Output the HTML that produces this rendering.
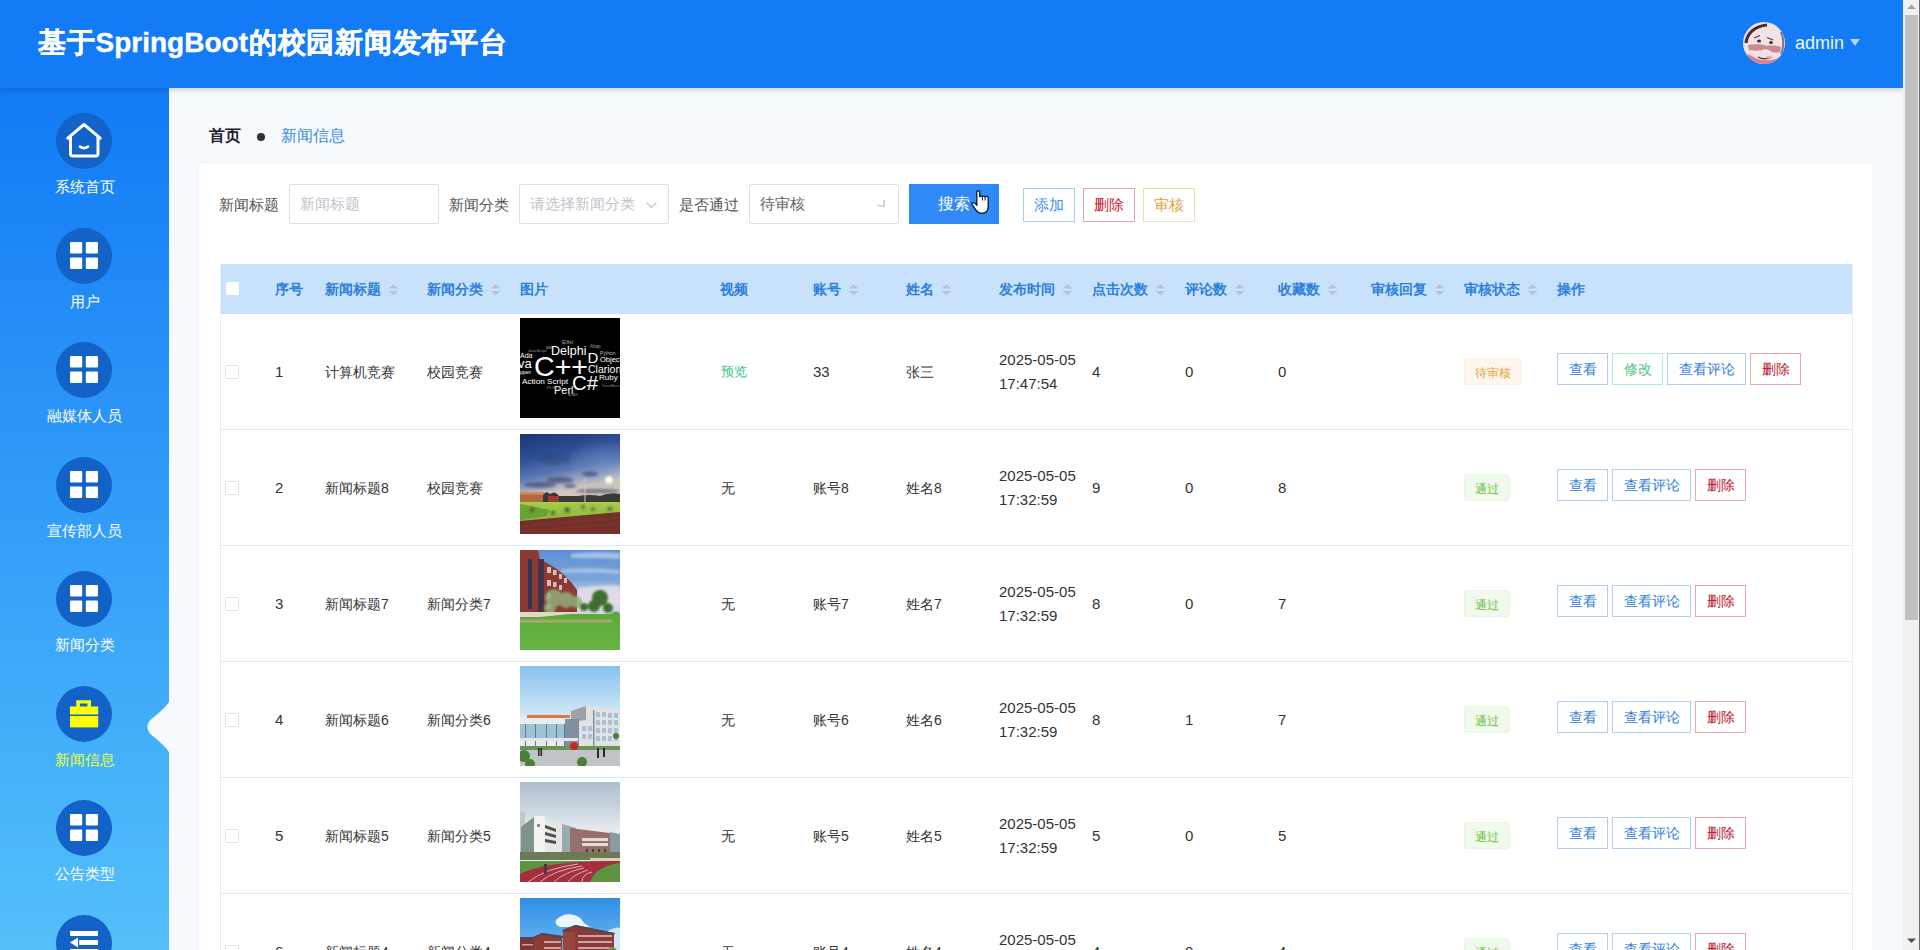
<!DOCTYPE html>
<html><head><meta charset="utf-8"><title>news</title>
<style>
*{box-sizing:border-box}
html,body{margin:0;padding:0}
body{width:1920px;height:950px;overflow:hidden;position:relative;background:#f6f9fe;font-family:"Liberation Sans",sans-serif;color:#606266}
#hdr{position:absolute;left:0;top:0;width:1903px;height:88px;background:#137bf5;box-shadow:0 1px 6px rgba(0,0,0,.22);z-index:5}
#title{position:absolute;left:38px;top:23px;font-size:28px;font-weight:bold;color:#fff;line-height:40px;white-space:nowrap;-webkit-text-stroke:0.4px #fff}
#ava{position:absolute;left:1743px;top:22px;width:42px;height:42px;border-radius:50%;overflow:hidden}
#uname{position:absolute;left:1795px;top:32px;font-size:18px;line-height:22px;color:#eef4ff}
#caret{position:absolute;left:1850px;top:39px;width:0;height:0;border-left:5.5px solid transparent;border-right:5.5px solid transparent;border-top:7px solid #b9d5fb}
#side{position:absolute;left:0;top:88px;width:169px;height:862px;background:linear-gradient(180deg,#127af5 0%,#319cf8 48%,#53c0fa 100%);z-index:2}
.mi{position:absolute;left:0;width:169px;height:110px}
.mi .c{position:absolute;left:56px;top:0;width:56px;height:56px;border-radius:50%;background:#1362c7}
.mi .c svg{position:absolute;left:0;top:0}
.mi .t{position:absolute;left:0;width:169px;top:63px;text-align:center;font-size:15px;color:#fff;line-height:22px;white-space:nowrap}
#notch{position:absolute;left:140px;top:699px;z-index:3}
#scroll{position:absolute;left:1903px;top:0;width:17px;height:950px;background:#f1f1f1;z-index:6;border-right:1px solid #6b6b6b}
#thumb{position:absolute;left:2px;top:15px;width:13px;height:605px;background:#c1c1c1}
#card{position:absolute;left:199px;top:164px;width:1673px;height:800px;background:#fff;box-shadow:0 0 3px rgba(0,0,0,.03)}
.crumb{position:absolute;top:125px;font-size:16px;line-height:22px;white-space:nowrap}
.lbl{position:absolute;top:194px;font-size:15px;line-height:22px;color:#555;white-space:nowrap}
.inp{position:absolute;top:184px;width:150px;height:40px;border:1px solid #dcdfe6;background:#fff;border-radius:2px}
.inp>span{position:absolute;left:10px;top:8px;font-size:15px;line-height:22px;white-space:nowrap}
.btn{position:absolute;top:188px;width:52px;height:34px;border:1px solid;background:#fff;font-size:15px;line-height:32px;text-align:center;white-space:nowrap}
#thead{position:absolute;left:220px;top:264px;width:1633px;height:50px;background:#c8e2fc}
.th{position:absolute;top:279px;font-size:14px;font-weight:bold;color:#2d7fdb;line-height:20px;white-space:nowrap}
.sort{position:absolute;top:282px;width:11px;height:12px}
.row{position:absolute;left:220px;width:1633px;height:116px;border-bottom:1px solid #dbe8f6;background:#fff}
.td{position:absolute;font-size:14px;color:#333;line-height:22px;white-space:nowrap}
.num{font-size:15px}
.cb{position:absolute;width:14px;height:14px;border:1px solid #dcdfe6;border-radius:2px;background:#fff}
.img{position:absolute;left:520px;width:100px;height:100px;overflow:hidden}
.tag{position:absolute;left:1464px;height:27px;border:1px solid;border-radius:4px;font-size:12px;line-height:28px;text-align:center;border-radius:3px;white-space:nowrap}
.j{display:inline-block;text-align:justify;text-align-last:justify;white-space:nowrap;vertical-align:top}
.nocjk .k{font-size:130%;line-height:0;vertical-align:-0.07em;-webkit-text-stroke:0.5px currentColor}
.ob{position:absolute;height:32px;border:1px solid;background:#fff;font-size:14px;line-height:30px;text-align:center;white-space:nowrap}
</style></head>
<body>
<div id="hdr"><div id="title"><span class="j" style="width:469px"><span class="k">基于</span>SpringBoot<span class="k">的校园新闻发布平台</span></span></div>
<div id="ava"><svg width="42" height="42" viewBox="0 0 42 42"><rect width="42" height="42" fill="#f2e2e6"/><path d="M3 21C4 11 12 4 24 3" fill="none" stroke="#4a2a36" stroke-width="3.2"/><path d="M38 10C41 16 41 26 38 32" fill="none" stroke="#3a2a40" stroke-width="2" opacity=".6"/><path d="M11 16L17 13.5M24 15.5L30 18" stroke="#553a40" stroke-width="1.3"/><ellipse cx="16" cy="19" rx="2" ry="1.6" fill="#3a2a30"/><ellipse cx="28" cy="20.5" rx="1.8" ry="1.6" fill="#3a2a30"/><path d="M5 23C10 22 20 22 24 24C28 23 36 24 38 25L37 30C33 31 29 31 26 28L22 27C18 29 10 29 6 28Z" fill="#c98a90"/><path d="M15 35Q21 38 27 36" fill="none" stroke="#4a2a30" stroke-width="1.2"/><path d="M4 32C10 34 14 38 20 38C28 39 34 37 38 34L36 42H6Z" fill="#e07c92"/><ellipse cx="26" cy="35" rx="3" ry="1.6" fill="#f0a8b6"/></svg></div>
<div id="uname">admin</div><div id="caret"></div></div>
<div id="side">
<div class="mi" style="top:25.00px"><div class="c"><svg width="56" height="56" viewBox="0 0 56 56"><path d="M11.8 25.2L28 11.5L44.2 25.2" fill="none" stroke="#fff" stroke-width="3" stroke-linejoin="round" stroke-linecap="round"/><path d="M14.5 23.5V40.5Q14.5 43 17 43H39.5Q42 43 42 40.5V23.5" fill="none" stroke="#fff" stroke-width="3" stroke-linecap="round"/><path d="M24 33.6Q28 36.6 32 33.6" fill="none" stroke="#fff" stroke-width="2.6" stroke-linecap="round"/></svg></div><div class="t" style="color:#fff"><span class="j" style="width:60.00px"><span class="k">系统首页</span></span></div></div>
<div class="mi" style="top:139.57px"><div class="c"><svg width="56" height="56" viewBox="0 0 56 56"><rect x="14" y="14" width="12.2" height="11.4" rx="1" fill="#fff"/><rect x="29.8" y="14" width="12.2" height="11.4" rx="1" fill="#fff"/><rect x="14" y="29.6" width="12.2" height="11.4" rx="1" fill="#fff"/><rect x="29.8" y="29.6" width="12.2" height="11.4" rx="1" fill="#fff"/></svg></div><div class="t" style="color:#fff"><span class="j" style="width:30.00px"><span class="k">用户</span></span></div></div>
<div class="mi" style="top:254.14px"><div class="c"><svg width="56" height="56" viewBox="0 0 56 56"><rect x="14" y="14" width="12.2" height="11.4" rx="1" fill="#fff"/><rect x="29.8" y="14" width="12.2" height="11.4" rx="1" fill="#fff"/><rect x="14" y="29.6" width="12.2" height="11.4" rx="1" fill="#fff"/><rect x="29.8" y="29.6" width="12.2" height="11.4" rx="1" fill="#fff"/></svg></div><div class="t" style="color:#fff"><span class="j" style="width:75.00px"><span class="k">融媒体人员</span></span></div></div>
<div class="mi" style="top:368.71px"><div class="c"><svg width="56" height="56" viewBox="0 0 56 56"><rect x="14" y="14" width="12.2" height="11.4" rx="1" fill="#fff"/><rect x="29.8" y="14" width="12.2" height="11.4" rx="1" fill="#fff"/><rect x="14" y="29.6" width="12.2" height="11.4" rx="1" fill="#fff"/><rect x="29.8" y="29.6" width="12.2" height="11.4" rx="1" fill="#fff"/></svg></div><div class="t" style="color:#fff"><span class="j" style="width:75.00px"><span class="k">宣传部人员</span></span></div></div>
<div class="mi" style="top:483.28px"><div class="c"><svg width="56" height="56" viewBox="0 0 56 56"><rect x="14" y="14" width="12.2" height="11.4" rx="1" fill="#fff"/><rect x="29.8" y="14" width="12.2" height="11.4" rx="1" fill="#fff"/><rect x="14" y="29.6" width="12.2" height="11.4" rx="1" fill="#fff"/><rect x="29.8" y="29.6" width="12.2" height="11.4" rx="1" fill="#fff"/></svg></div><div class="t" style="color:#fff"><span class="j" style="width:60.00px"><span class="k">新闻分类</span></span></div></div>
<div class="mi" style="top:597.85px"><div class="c"><svg width="56" height="56" viewBox="0 0 56 56"><path d="M20.3 21V14.2H35V21H31.4V17.5H23.9V21Z" fill="#ffff00"/><rect x="14" y="20.5" width="28.2" height="8" fill="#ffff00"/><rect x="14" y="30" width="28.2" height="11.4" fill="#ffff00"/></svg></div><div class="t" style="color:#ebff3c"><span class="j" style="width:60.00px"><span class="k">新闻信息</span></span></div></div>
<div class="mi" style="top:712.42px"><div class="c"><svg width="56" height="56" viewBox="0 0 56 56"><rect x="14" y="14" width="12.2" height="11.4" rx="1" fill="#fff"/><rect x="29.8" y="14" width="12.2" height="11.4" rx="1" fill="#fff"/><rect x="14" y="29.6" width="12.2" height="11.4" rx="1" fill="#fff"/><rect x="29.8" y="29.6" width="12.2" height="11.4" rx="1" fill="#fff"/></svg></div><div class="t" style="color:#fff"><span class="j" style="width:60.00px"><span class="k">公告类型</span></span></div></div>
<div class="mi" style="top:826.99px"><div class="c"><svg width="56" height="56" viewBox="0 0 56 56"><rect x="14" y="16" width="28" height="5" fill="#fff"/><rect x="23.2" y="25" width="18.8" height="5" fill="#fff"/><path d="M14 27.5L22 22.5V32.5Z" fill="#fff"/><rect x="14" y="34" width="28" height="5" fill="#fff"/></svg></div><div class="t" style="color:#fff"></div></div>
</div>
<svg id="notch" width="30" height="56" viewBox="0 0 30 56"><path d="M29.5 0V2C26 8 18 15 12 19.5C6 24 6 32 12 36.5C18 41 26 48 29.5 54V56H30V0Z" fill="#f6f9fe"/></svg>
<div id="scroll"><svg style="position:absolute;left:4px;top:4px" width="9" height="6"><path d="M0 5L4.5 0.5L9 5Z" fill="#a3a3a3"/></svg><div id="thumb"></div><svg style="position:absolute;left:4px;top:938px" width="9" height="6"><path d="M0 0.5L4.5 5L9 0.5Z" fill="#505050"/></svg></div>
<div class="crumb" style="left:209px;font-weight:bold;color:#222"><span class="j" style="width:32.00px"><span class="k">首页</span></span></div>
<div style="position:absolute;left:257px;top:133px;width:8px;height:8px;border-radius:50%;background:#303133"></div>
<div class="crumb" style="left:281px;color:#3a8ee0"><span class="j" style="width:64.00px"><span class="k">新闻信息</span></span></div>
<div id="card"></div>
<div class="lbl" style="left:219px"><span class="j" style="width:60.00px"><span class="k">新闻标题</span></span></div>
<div class="inp" style="left:289px"><span style="color:#c0c4cc"><span class="j" style="width:60.00px"><span class="k">新闻标题</span></span></span></div>
<div class="lbl" style="left:449px"><span class="j" style="width:60.00px"><span class="k">新闻分类</span></span></div>
<div class="inp" style="left:519px"><span style="color:#c0c4cc"><span class="j" style="width:105.00px"><span class="k">请选择新闻分类</span></span></span><svg style="position:absolute;left:126px;top:17px" width="11" height="7"><path d="M0.6 0.6L5.5 5.5L10.4 0.6" fill="none" stroke="#c0c4cc" stroke-width="1.3"/></svg></div>
<div class="lbl" style="left:679px"><span class="j" style="width:60.00px"><span class="k">是否通过</span></span></div>
<div class="inp" style="left:749px"><span style="color:#606266"><span class="j" style="width:45.00px"><span class="k">待审核</span></span></span><svg style="position:absolute;left:126px;top:14px" width="10" height="10"><path d="M8.2 1V7.2L1.5 6.4" fill="none" stroke="#c4c7cc" stroke-width="1.4" stroke-linejoin="round"/></svg></div>
<div style="position:absolute;left:909px;top:184px;width:90px;height:40px;background:#2f89f6;color:#fff;font-size:16px;line-height:40px;text-align:center;white-space:nowrap;padding-left:0"><span style="position:absolute;left:29px;top:0"><span class="j" style="width:32.00px"><span class="k">搜索</span></span></span></div>
<svg style="position:absolute;left:971px;top:189px" width="20" height="26" viewBox="0 0 20 26"><path d="M5.8 2.8Q7.2 0.6 8.7 2.8V7.6Q10 6.4 11.4 7.6Q12.7 6.5 14.1 7.8Q15.6 6.8 17.2 8.4V17Q17.2 24.2 11 24.3Q7.2 24.4 5 21.2L1.2 15.6Q0.5 14 2 13.7Q3.5 13.5 5.8 16.4Z" fill="#fff" stroke="#0c1838" stroke-width="1.3" stroke-linejoin="round"/><path d="M11.4 7.8V11.5M14.1 8V11.5" stroke="#0c1838" stroke-width="1"/></svg>
<div class="btn" style="left:1023px;border-color:#a9cdf3;color:#3b8fe6"><span class="j" style="width:30.00px"><span class="k">添加</span></span></div>
<div class="btn" style="left:1083px;border-color:#e5a3ab;color:#c8182f"><span class="j" style="width:30.00px"><span class="k">删除</span></span></div>
<div class="btn" style="left:1143px;border-color:#f5dcb2;color:#e3a13a"><span class="j" style="width:30.00px"><span class="k">审核</span></span></div>
<div id="thead"></div>
<div style="position:absolute;left:226px;top:282px;width:13px;height:13px;background:#fff;border-radius:1px"></div>
<div class="th" style="left:275px"><span class="j" style="width:28.00px"><span class="k">序号</span></span></div>
<div class="th" style="left:325px"><span class="j" style="width:56.00px"><span class="k">新闻标题</span></span></div>
<div class="sort" style="left:388px"><svg width="11" height="12" viewBox="0 0 11 12"><path d="M5.5 0.3L10.5 4.6H0.5Z" fill="#b9c3cf"/><path d="M5.5 11.4L10.5 7.1H0.5Z" fill="#b9c3cf"/></svg></div>
<div class="th" style="left:427px"><span class="j" style="width:56.00px"><span class="k">新闻分类</span></span></div>
<div class="sort" style="left:490px"><svg width="11" height="12" viewBox="0 0 11 12"><path d="M5.5 0.3L10.5 4.6H0.5Z" fill="#b9c3cf"/><path d="M5.5 11.4L10.5 7.1H0.5Z" fill="#b9c3cf"/></svg></div>
<div class="th" style="left:520px"><span class="j" style="width:28.00px"><span class="k">图片</span></span></div>
<div class="th" style="left:720px"><span class="j" style="width:28.00px"><span class="k">视频</span></span></div>
<div class="th" style="left:813px"><span class="j" style="width:28.00px"><span class="k">账号</span></span></div>
<div class="sort" style="left:848px"><svg width="11" height="12" viewBox="0 0 11 12"><path d="M5.5 0.3L10.5 4.6H0.5Z" fill="#b9c3cf"/><path d="M5.5 11.4L10.5 7.1H0.5Z" fill="#b9c3cf"/></svg></div>
<div class="th" style="left:906px"><span class="j" style="width:28.00px"><span class="k">姓名</span></span></div>
<div class="sort" style="left:941px"><svg width="11" height="12" viewBox="0 0 11 12"><path d="M5.5 0.3L10.5 4.6H0.5Z" fill="#b9c3cf"/><path d="M5.5 11.4L10.5 7.1H0.5Z" fill="#b9c3cf"/></svg></div>
<div class="th" style="left:999px"><span class="j" style="width:56.00px"><span class="k">发布时间</span></span></div>
<div class="sort" style="left:1062px"><svg width="11" height="12" viewBox="0 0 11 12"><path d="M5.5 0.3L10.5 4.6H0.5Z" fill="#b9c3cf"/><path d="M5.5 11.4L10.5 7.1H0.5Z" fill="#b9c3cf"/></svg></div>
<div class="th" style="left:1092px"><span class="j" style="width:56.00px"><span class="k">点击次数</span></span></div>
<div class="sort" style="left:1155px"><svg width="11" height="12" viewBox="0 0 11 12"><path d="M5.5 0.3L10.5 4.6H0.5Z" fill="#b9c3cf"/><path d="M5.5 11.4L10.5 7.1H0.5Z" fill="#b9c3cf"/></svg></div>
<div class="th" style="left:1185px"><span class="j" style="width:42.00px"><span class="k">评论数</span></span></div>
<div class="sort" style="left:1234px"><svg width="11" height="12" viewBox="0 0 11 12"><path d="M5.5 0.3L10.5 4.6H0.5Z" fill="#b9c3cf"/><path d="M5.5 11.4L10.5 7.1H0.5Z" fill="#b9c3cf"/></svg></div>
<div class="th" style="left:1278px"><span class="j" style="width:42.00px"><span class="k">收藏数</span></span></div>
<div class="sort" style="left:1327px"><svg width="11" height="12" viewBox="0 0 11 12"><path d="M5.5 0.3L10.5 4.6H0.5Z" fill="#b9c3cf"/><path d="M5.5 11.4L10.5 7.1H0.5Z" fill="#b9c3cf"/></svg></div>
<div class="th" style="left:1371px"><span class="j" style="width:56.00px"><span class="k">审核回复</span></span></div>
<div class="sort" style="left:1434px"><svg width="11" height="12" viewBox="0 0 11 12"><path d="M5.5 0.3L10.5 4.6H0.5Z" fill="#b9c3cf"/><path d="M5.5 11.4L10.5 7.1H0.5Z" fill="#b9c3cf"/></svg></div>
<div class="th" style="left:1464px"><span class="j" style="width:56.00px"><span class="k">审核状态</span></span></div>
<div class="sort" style="left:1527px"><svg width="11" height="12" viewBox="0 0 11 12"><path d="M5.5 0.3L10.5 4.6H0.5Z" fill="#b9c3cf"/><path d="M5.5 11.4L10.5 7.1H0.5Z" fill="#b9c3cf"/></svg></div>
<div class="th" style="left:1557px"><span class="j" style="width:28.00px"><span class="k">操作</span></span></div>
<div class="row" style="top:314px;height:116px"></div>
<div class="cb" style="left:225px;top:365px"></div>
<div class="td num" style="left:275px;top:361px">1</div>
<div class="td" style="left:325px;top:361px"><span class="j" style="width:70.00px"><span class="k">计算机竞赛</span></span></div>
<div class="td" style="left:427px;top:361px"><span class="j" style="width:56.00px"><span class="k">校园竞赛</span></span></div>
<div class="img" style="top:318px"><svg width="100" height="100" viewBox="0 0 100 100"><rect width="100" height="100" fill="#000"/>
<g fill="#fff" font-family="Liberation Sans">
<text x="42" y="26" font-size="5" fill="#aaa">Eiffel</text>
<text x="26" y="31" font-size="4" fill="#999">ABL</text>
<text x="70" y="30" font-size="4.5" fill="#999">Abap</text>
<text x="8" y="34" font-size="4" fill="#999">JavaScript</text>
<text x="31" y="37" font-size="12.5">Delphi</text>
<text x="80" y="37" font-size="5" fill="#bbb">Python</text>
<text x="0" y="40" font-size="7">Ada</text>
<text x="67.5" y="45" font-size="15">D</text>
<text x="80" y="44" font-size="7.5">Object</text>
<text x="-2" y="50" font-size="13">va</text>
<text x="14" y="57.5" font-size="28" textLength="54" lengthAdjust="spacingAndGlyphs">C++</text>
<text x="0" y="56" font-size="5.5">pper</text>
<text x="68" y="55" font-size="10.5">Clarion</text>
<text x="79" y="62" font-size="8">Ruby</text>
<text x="2" y="65.5" font-size="8" textLength="46" lengthAdjust="spacingAndGlyphs">Action Script</text>
<text x="52" y="71.5" font-size="20" textLength="26" lengthAdjust="spacingAndGlyphs">C#</text>
<text x="34" y="76" font-size="11">Perl</text>
<text x="27" y="71" font-size="4" fill="#999">PL/SQ</text>
<text x="82" y="69" font-size="3.5" fill="#888">VisualBasic</text>
<text x="48" y="78" font-size="4" fill="#888">AJAX</text>
</g></svg></div>
<div class="td" style="left:721px;top:361px;color:#3cc48a;font-size:13px"><span class="j" style="width:26.00px"><span class="k">预览</span></span></div>
<div class="td num" style="left:813px;top:361px">33</div>
<div class="td" style="left:906px;top:361px"><span class="j" style="width:28.00px"><span class="k">张三</span></span></div>
<div class="td num" style="left:999px;top:348px;line-height:24px">2025-05-05<br>17:47:54</div>
<div class="td num" style="left:1092px;top:361px">4</div>
<div class="td num" style="left:1185px;top:361px">0</div>
<div class="td num" style="left:1278px;top:361px">0</div>
<div class="tag" style="top:358px;width:58px;background:#fdf6ec;border-color:#fbf1e3;color:#e6a23c"><span class="j" style="width:36.00px"><span class="k">待审核</span></span></div>
<div class="ob" style="left:1557px;top:353px;width:51px;border-color:#b0cff2;color:#2f7fd8"><span class="j" style="width:28.00px"><span class="k">查看</span></span></div>
<div class="ob" style="left:1612px;top:353px;width:51px;border-color:#b6e8cc;color:#4cc38a"><span class="j" style="width:28.00px"><span class="k">修改</span></span></div>
<div class="ob" style="left:1667px;top:353px;width:79px;border-color:#b0cff2;color:#2f7fd8"><span class="j" style="width:56.00px"><span class="k">查看评论</span></span></div>
<div class="ob" style="left:1750px;top:353px;width:51px;border-color:#e8a6ae;color:#b8142c"><span class="j" style="width:28.00px"><span class="k">删除</span></span></div>
<div class="row" style="top:430px;height:116px"></div>
<div class="cb" style="left:225px;top:481px"></div>
<div class="td num" style="left:275px;top:477px">2</div>
<div class="td" style="left:325px;top:477px"><span class="j" style="width:63.79px"><span class="k">新闻标题</span>8</span></div>
<div class="td" style="left:427px;top:477px"><span class="j" style="width:56.00px"><span class="k">校园竞赛</span></span></div>
<div class="img" style="top:434px"><svg width="100" height="100" viewBox="0 0 100 100"><defs>
<linearGradient id="s2" x1="0" y1="0" x2="0.3" y2="1"><stop offset="0" stop-color="#1a3674"/><stop offset="0.35" stop-color="#2e4f95"/><stop offset="0.6" stop-color="#5a78b2"/><stop offset="0.74" stop-color="#9aa6c4"/><stop offset="0.86" stop-color="#d2c6be"/></linearGradient>
<linearGradient id="f2" x1="0" y1="0" x2="0" y2="1"><stop offset="0" stop-color="#a9cc4c"/><stop offset="1" stop-color="#86b23a"/></linearGradient>
<radialGradient id="r2"><stop offset="0" stop-color="#7090c8" stop-opacity=".45"/><stop offset="1" stop-color="#7090c8" stop-opacity="0"/></radialGradient>
<filter id="b2" x="-20%" y="-50%" width="140%" height="200%"><feGaussianBlur stdDeviation="1.6"/></filter>
<radialGradient id="l2"><stop offset="0" stop-color="#fff"/><stop offset="0.35" stop-color="#fffbe0"/><stop offset="1" stop-color="#e8e4e0" stop-opacity="0"/></radialGradient></defs>
<rect width="100" height="70" fill="url(#s2)"/>
<ellipse cx="80" cy="30" rx="34" ry="26" fill="url(#r2)"/>
<g fill="#2e3a62" opacity=".6" filter="url(#b2)"><ellipse cx="40" cy="46" rx="14" ry="3"/><ellipse cx="70" cy="40" rx="8" ry="2.6"/><ellipse cx="20" cy="51" rx="16" ry="3"/><ellipse cx="50" cy="52" rx="6" ry="2"/><ellipse cx="78" cy="57" rx="22" ry="2"/><ellipse cx="35" cy="25" rx="16" ry="6" opacity=".5"/></g>
<circle cx="89" cy="46" r="6" fill="url(#l2)"/>
<rect x="0" y="58" width="24" height="12" fill="#b06a40"/><rect x="0" y="58" width="24" height="2.5" fill="#d88a56"/>
<path d="M23 70V61Q26 56 30 60Q35 56 39 62H58Q70 60 80 62Q90 58 100 60V70Z" fill="#3a3a32"/>
<rect x="28" y="62" width="11" height="6" fill="#9c3a34"/>
<rect x="64.5" y="44" width="1" height="28" fill="#c8c8c8"/>
<path d="M0 68H100V80L0 88Z" fill="url(#f2)"/>
<path d="M0 70L30 76L26 82L0 86Z" fill="#5f9830" opacity=".75"/>
<path d="M0 87L100 78V100H0Z" fill="#74302a"/>
<path d="M0 92L100 84M0 97L100 90" stroke="#86402f" stroke-width=".6"/>
<g fill="#3a4034" filter="url(#b2)" opacity=".9"><circle cx="12" cy="76" r="2"/><circle cx="47" cy="76" r="2.5"/><circle cx="63" cy="73" r="1.8"/><circle cx="73" cy="75" r="1.8"/><circle cx="90" cy="75" r="2"/><circle cx="33" cy="79" r="2"/></g>
</svg></div>
<div class="td" style="left:721px;top:477px;color:#333;font-size:14px"><span class="j" style="width:14.00px"><span class="k">无</span></span></div>
<div class="td" style="left:813px;top:477px"><span class="j" style="width:35.79px"><span class="k">账号</span>8</span></div>
<div class="td" style="left:906px;top:477px"><span class="j" style="width:35.79px"><span class="k">姓名</span>8</span></div>
<div class="td num" style="left:999px;top:464px;line-height:24px">2025-05-05<br>17:32:59</div>
<div class="td num" style="left:1092px;top:477px">9</div>
<div class="td num" style="left:1185px;top:477px">0</div>
<div class="td num" style="left:1278px;top:477px">8</div>
<div class="tag" style="top:474px;width:46px;background:#f0f9eb;border-color:#e9f6e2;color:#67c23a"><span class="j" style="width:24.00px"><span class="k">通过</span></span></div>
<div class="ob" style="left:1557px;top:469px;width:51px;border-color:#b0cff2;color:#2f7fd8"><span class="j" style="width:28.00px"><span class="k">查看</span></span></div>
<div class="ob" style="left:1612px;top:469px;width:79px;border-color:#b0cff2;color:#2f7fd8"><span class="j" style="width:56.00px"><span class="k">查看评论</span></span></div>
<div class="ob" style="left:1695px;top:469px;width:51px;border-color:#e8a6ae;color:#b8142c"><span class="j" style="width:28.00px"><span class="k">删除</span></span></div>
<div class="row" style="top:546px;height:116px"></div>
<div class="cb" style="left:225px;top:597px"></div>
<div class="td num" style="left:275px;top:593px">3</div>
<div class="td" style="left:325px;top:593px"><span class="j" style="width:63.79px"><span class="k">新闻标题</span>7</span></div>
<div class="td" style="left:427px;top:593px"><span class="j" style="width:63.79px"><span class="k">新闻分类</span>7</span></div>
<div class="img" style="top:550px"><svg width="100" height="100" viewBox="0 0 100 100"><defs>
<linearGradient id="s3" x1="0" y1="0" x2="0" y2="1"><stop offset="0" stop-color="#5b8fd2"/><stop offset="0.3" stop-color="#7da6da"/><stop offset="0.5" stop-color="#d6dae8"/></linearGradient>
<linearGradient id="g3" x1="0" y1="0" x2="0" y2="1"><stop offset="0" stop-color="#5aaa3c"/><stop offset="1" stop-color="#66b444"/></linearGradient>
<filter id="b3" x="-20%" y="-20%" width="140%" height="140%"><feGaussianBlur stdDeviation="1"/></filter></defs>
<rect width="100" height="100" fill="url(#s3)"/>
<g filter="url(#b3)"><path d="M50 4Q70 1 100 3V9Q75 8 52 8Z" fill="#e8eef8" opacity=".5"/>
<path d="M40 20Q60 16 100 20V24Q70 22 42 23Z" fill="#e8eef8" opacity=".4"/>
<path d="M58 38Q80 34 100 36V54H58Z" fill="#e6dde6" opacity=".85"/></g>
<path d="M0 0H18L20 10L25 12Q45 22 57 40V64H0Z" fill="#8a3a32"/>
<path d="M18 9H24V64H18Z" fill="#5a2e36"/>
<g fill="#2c3856"><rect x="8" y="9" width="4" height="50"/><rect x="19" y="13" width="3.5" height="46"/></g>
<g fill="#d8cccc" opacity=".9"><rect x="27" y="17" width="4" height="6"/><rect x="33" y="20" width="3.5" height="5"/><rect x="39" y="24" width="3" height="5"/><rect x="44" y="28" width="3" height="5"/><rect x="27" y="30" width="4" height="6"/><rect x="33" y="32" width="3.5" height="5"/><rect x="39" y="35" width="3" height="5"/><rect x="27" y="43" width="4" height="6"/><rect x="27" y="54" width="4" height="5"/></g>
<g filter="url(#b3)"><g fill="#90ae7c" opacity=".85"><circle cx="34" cy="48" r="9"/><circle cx="46" cy="50" r="8"/><circle cx="56" cy="52" r="6"/><circle cx="30" cy="58" r="6"/></g>
<g fill="#3f6e30"><circle cx="80" cy="48" r="8"/><circle cx="74" cy="56" r="6"/><circle cx="88" cy="58" r="5"/><circle cx="96" cy="68" r="6"/><circle cx="64" cy="57" r="4"/></g></g>
<rect x="0" y="62" width="60" height="8" fill="#ddd6c6"/>
<rect x="0" y="64" width="100" height="36" fill="url(#g3)"/>
<path d="M0 63H60L20 67H0Z" fill="#e0d8c8"/>
<rect x="0" y="70" width="92" height="2.5" fill="#c8a882" filter="url(#b3)"/>
</svg></div>
<div class="td" style="left:721px;top:593px;color:#333;font-size:14px"><span class="j" style="width:14.00px"><span class="k">无</span></span></div>
<div class="td" style="left:813px;top:593px"><span class="j" style="width:35.79px"><span class="k">账号</span>7</span></div>
<div class="td" style="left:906px;top:593px"><span class="j" style="width:35.79px"><span class="k">姓名</span>7</span></div>
<div class="td num" style="left:999px;top:580px;line-height:24px">2025-05-05<br>17:32:59</div>
<div class="td num" style="left:1092px;top:593px">8</div>
<div class="td num" style="left:1185px;top:593px">0</div>
<div class="td num" style="left:1278px;top:593px">7</div>
<div class="tag" style="top:590px;width:46px;background:#f0f9eb;border-color:#e9f6e2;color:#67c23a"><span class="j" style="width:24.00px"><span class="k">通过</span></span></div>
<div class="ob" style="left:1557px;top:585px;width:51px;border-color:#b0cff2;color:#2f7fd8"><span class="j" style="width:28.00px"><span class="k">查看</span></span></div>
<div class="ob" style="left:1612px;top:585px;width:79px;border-color:#b0cff2;color:#2f7fd8"><span class="j" style="width:56.00px"><span class="k">查看评论</span></span></div>
<div class="ob" style="left:1695px;top:585px;width:51px;border-color:#e8a6ae;color:#b8142c"><span class="j" style="width:28.00px"><span class="k">删除</span></span></div>
<div class="row" style="top:662px;height:116px"></div>
<div class="cb" style="left:225px;top:713px"></div>
<div class="td num" style="left:275px;top:709px">4</div>
<div class="td" style="left:325px;top:709px"><span class="j" style="width:63.79px"><span class="k">新闻标题</span>6</span></div>
<div class="td" style="left:427px;top:709px"><span class="j" style="width:63.79px"><span class="k">新闻分类</span>6</span></div>
<div class="img" style="top:666px"><svg width="100" height="100" viewBox="0 0 100 100"><defs>
<linearGradient id="s4" x1="0" y1="0" x2="0" y2="1"><stop offset="0" stop-color="#86c2ee"/><stop offset="0.5" stop-color="#d2e8f6"/></linearGradient></defs>
<rect width="100" height="100" fill="url(#s4)"/>
<path d="M51 45L66 40L100 44V82H51Z" fill="#e0e2e4"/>
<path d="M51 45L66 40V54L51 56Z" fill="#9ca2a8"/>
<g fill="#a9c2d6"><rect x="76" y="46" width="4" height="5"/><rect x="82" y="46" width="4" height="5"/><rect x="88" y="47" width="4" height="5"/><rect x="94" y="47" width="4" height="5"/><rect x="76" y="54" width="4" height="5"/><rect x="82" y="54" width="4" height="5"/><rect x="88" y="54" width="4" height="5"/><rect x="94" y="54" width="4" height="5"/><rect x="76" y="62" width="4" height="5"/><rect x="82" y="62" width="4" height="5"/><rect x="88" y="62" width="4" height="5"/><rect x="94" y="62" width="4" height="5"/><rect x="76" y="70" width="4" height="5"/><rect x="82" y="70" width="4" height="5"/><rect x="88" y="70" width="4" height="5"/><rect x="94" y="70" width="4" height="5"/><rect x="62" y="60" width="4" height="5"/><rect x="68" y="60" width="4" height="5"/><rect x="62" y="68" width="4" height="5"/><rect x="68" y="68" width="4" height="5"/></g>
<rect x="73" y="44" width="1.5" height="38" fill="#888f96"/>
<path d="M0 51L7 49H50V82H0Z" fill="#e8ecee"/>
<rect x="7" y="49" width="43" height="3" fill="#d8764c"/>
<rect x="0" y="58" width="50" height="15" fill="#9cc4d6"/>
<g fill="#6a7a88"><rect x="5" y="58" width="1" height="24"/><rect x="15" y="58" width="1" height="24"/><rect x="26" y="58" width="1" height="24"/><rect x="36" y="58" width="1" height="24"/><rect x="44" y="58" width="1" height="24"/></g>
<rect x="45" y="53" width="14" height="28" fill="#7f909e"/>
<rect x="0" y="72" width="58" height="3" fill="#e4e4e4"/>
<rect x="0" y="80" width="100" height="5" fill="#6a9456"/>
<rect x="0" y="84" width="100" height="16" fill="#bfc5c6"/>
<circle cx="54" cy="80" r="4" fill="#c42a22"/>
<g fill="#2a2a2a"><rect x="18" y="82" width="1.6" height="8"/><rect x="20.5" y="82" width="1.6" height="8"/><rect x="77" y="82" width="2" height="10"/><rect x="83" y="82" width="2" height="9"/></g>
<g fill="#4a7e3a"><circle cx="4" cy="90" r="6"/><circle cx="10" cy="98" r="5"/><circle cx="62" cy="96" r="5"/><circle cx="96" cy="70" r="3"/></g>
</svg></div>
<div class="td" style="left:721px;top:709px;color:#333;font-size:14px"><span class="j" style="width:14.00px"><span class="k">无</span></span></div>
<div class="td" style="left:813px;top:709px"><span class="j" style="width:35.79px"><span class="k">账号</span>6</span></div>
<div class="td" style="left:906px;top:709px"><span class="j" style="width:35.79px"><span class="k">姓名</span>6</span></div>
<div class="td num" style="left:999px;top:696px;line-height:24px">2025-05-05<br>17:32:59</div>
<div class="td num" style="left:1092px;top:709px">8</div>
<div class="td num" style="left:1185px;top:709px">1</div>
<div class="td num" style="left:1278px;top:709px">7</div>
<div class="tag" style="top:706px;width:46px;background:#f0f9eb;border-color:#e9f6e2;color:#67c23a"><span class="j" style="width:24.00px"><span class="k">通过</span></span></div>
<div class="ob" style="left:1557px;top:701px;width:51px;border-color:#b0cff2;color:#2f7fd8"><span class="j" style="width:28.00px"><span class="k">查看</span></span></div>
<div class="ob" style="left:1612px;top:701px;width:79px;border-color:#b0cff2;color:#2f7fd8"><span class="j" style="width:56.00px"><span class="k">查看评论</span></span></div>
<div class="ob" style="left:1695px;top:701px;width:51px;border-color:#e8a6ae;color:#b8142c"><span class="j" style="width:28.00px"><span class="k">删除</span></span></div>
<div class="row" style="top:778px;height:116px"></div>
<div class="cb" style="left:225px;top:829px"></div>
<div class="td num" style="left:275px;top:825px">5</div>
<div class="td" style="left:325px;top:825px"><span class="j" style="width:63.79px"><span class="k">新闻标题</span>5</span></div>
<div class="td" style="left:427px;top:825px"><span class="j" style="width:63.79px"><span class="k">新闻分类</span>5</span></div>
<div class="img" style="top:782px"><svg width="100" height="100" viewBox="0 0 100 100"><defs>
<linearGradient id="s5" x1="0" y1="0" x2="0" y2="1"><stop offset="0" stop-color="#aebdcf"/><stop offset="0.3" stop-color="#cfd8e2"/><stop offset="0.5" stop-color="#e8ecf0"/></linearGradient></defs>
<rect width="100" height="100" fill="url(#s5)"/>
<path d="M0 30H5V70H0Z" fill="#c0c8cc"/>
<path d="M1 45L14 35V72H1Z" fill="#7e9488"/>
<path d="M14 34H25V70H14Z" fill="#f2f2f0"/>
<rect x="17" y="42" width="3" height="3" fill="#888"/>
<path d="M25 37L42 42V70H25Z" fill="#e6e6e2"/>
<g fill="#4a4e50"><path d="M25 43L36 47V50L25 46Z"/><path d="M25 50L36 53V56L25 53Z"/><path d="M25 57L36 59V62L25 60Z"/></g>
<path d="M42 42L56 46V72H42Z" fill="#98aab2"/>
<path d="M50 46L90 51V72H50Z" fill="#96706a"/>
<path d="M90 50L100 52V72H90Z" fill="#8a9ca2"/>
<g fill="#e2dcd6"><rect x="62" y="56" width="26" height="3"/><rect x="62" y="61" width="26" height="3"/></g>
<g fill="#503c38"><rect x="66" y="67" width="2" height="6"/><rect x="72" y="67" width="2" height="6"/><rect x="78" y="67" width="2" height="6"/><rect x="84" y="67" width="2" height="6"/></g>
<rect x="0" y="70" width="100" height="8" fill="#6c7a56"/>
<rect x="70" y="76" width="30" height="3" fill="#d8d0c0"/>
<path d="M0 79H100V100H0Z" fill="#5d9444"/>
<path d="M0 100V92Q20 82 60 80Q80 79 100 79V81Q76 84 70 100Z" fill="#a3303c"/>
<g fill="none" stroke="#f0e8e8" stroke-width=".7"><path d="M8 100Q26 86 58 82"/><path d="M20 100Q34 88 62 84"/><path d="M34 100Q44 90 64 86"/><path d="M48 100Q54 92 68 88"/><path d="M62 100Q62 92 72 90"/></g>
<rect x="24" y="84" width="3" height="8" fill="#603040"/><circle cx="25.5" cy="83" r="1.3" fill="#402020"/>
</svg></div>
<div class="td" style="left:721px;top:825px;color:#333;font-size:14px"><span class="j" style="width:14.00px"><span class="k">无</span></span></div>
<div class="td" style="left:813px;top:825px"><span class="j" style="width:35.79px"><span class="k">账号</span>5</span></div>
<div class="td" style="left:906px;top:825px"><span class="j" style="width:35.79px"><span class="k">姓名</span>5</span></div>
<div class="td num" style="left:999px;top:812px;line-height:24px">2025-05-05<br>17:32:59</div>
<div class="td num" style="left:1092px;top:825px">5</div>
<div class="td num" style="left:1185px;top:825px">0</div>
<div class="td num" style="left:1278px;top:825px">5</div>
<div class="tag" style="top:822px;width:46px;background:#f0f9eb;border-color:#e9f6e2;color:#67c23a"><span class="j" style="width:24.00px"><span class="k">通过</span></span></div>
<div class="ob" style="left:1557px;top:817px;width:51px;border-color:#b0cff2;color:#2f7fd8"><span class="j" style="width:28.00px"><span class="k">查看</span></span></div>
<div class="ob" style="left:1612px;top:817px;width:79px;border-color:#b0cff2;color:#2f7fd8"><span class="j" style="width:56.00px"><span class="k">查看评论</span></span></div>
<div class="ob" style="left:1695px;top:817px;width:51px;border-color:#e8a6ae;color:#b8142c"><span class="j" style="width:28.00px"><span class="k">删除</span></span></div>
<div class="row" style="top:894px;height:116px"></div>
<div class="cb" style="left:225px;top:945px"></div>
<div class="td num" style="left:275px;top:941px">6</div>
<div class="td" style="left:325px;top:941px"><span class="j" style="width:63.79px"><span class="k">新闻标题</span>4</span></div>
<div class="td" style="left:427px;top:941px"><span class="j" style="width:63.79px"><span class="k">新闻分类</span>4</span></div>
<div class="img" style="top:898px"><svg width="100" height="100" viewBox="0 0 100 100"><defs>
<linearGradient id="s6" x1="0" y1="0" x2="0" y2="1"><stop offset="0" stop-color="#2f8ee6"/><stop offset="0.4" stop-color="#5eaef0"/></linearGradient></defs>
<rect width="100" height="100" fill="url(#s6)"/>
<path d="M36 22Q44 14 54 17Q60 18 64 25L70 29H40Q34 26 36 22Z" fill="#f6fafe" opacity=".95"/>
<path d="M86 34Q96 28 100 30V52H92Z" fill="#e4f0fa" opacity=".85"/>
<path d="M43 32L56 27L94 35V100H43Z" fill="#8a3a38"/>
<path d="M42 32L55 27L95 35L94 37L55 29L43 34Z" fill="#4a4a50"/>
<path d="M14 39L22 35L42 38V100H14Z" fill="#8e3c38"/>
<path d="M13 39L22 35L43 38V40L22 37L14 41Z" fill="#4a4a50"/>
<path d="M0 40H14V100H0Z" fill="#7c3634"/><rect x="0" y="39" width="14" height="2" fill="#4a4a50"/>
<g fill="#d8c0bc" opacity=".8"><rect x="58" y="37" width="34" height="2"/><rect x="58" y="43" width="34" height="2"/><rect x="58" y="49" width="34" height="2"/><rect x="24" y="43" width="17" height="2"/><rect x="24" y="49" width="17" height="2"/><rect x="2" y="46" width="11" height="1.5"/></g>
<rect x="43" y="34" width="12" height="66" fill="#9a4440"/>
<circle cx="92" cy="54" r="5" fill="#5a9a3c"/>
</svg></div>
<div class="td" style="left:721px;top:941px;color:#333;font-size:14px"><span class="j" style="width:14.00px"><span class="k">无</span></span></div>
<div class="td" style="left:813px;top:941px"><span class="j" style="width:35.79px"><span class="k">账号</span>4</span></div>
<div class="td" style="left:906px;top:941px"><span class="j" style="width:35.79px"><span class="k">姓名</span>4</span></div>
<div class="td num" style="left:999px;top:928px;line-height:24px">2025-05-05<br>17:32:59</div>
<div class="td num" style="left:1092px;top:941px">4</div>
<div class="td num" style="left:1185px;top:941px">0</div>
<div class="td num" style="left:1278px;top:941px">4</div>
<div class="tag" style="top:938px;width:46px;background:#f0f9eb;border-color:#e9f6e2;color:#67c23a"><span class="j" style="width:24.00px"><span class="k">通过</span></span></div>
<div class="ob" style="left:1557px;top:933px;width:51px;border-color:#b0cff2;color:#2f7fd8"><span class="j" style="width:28.00px"><span class="k">查看</span></span></div>
<div class="ob" style="left:1612px;top:933px;width:79px;border-color:#b0cff2;color:#2f7fd8"><span class="j" style="width:56.00px"><span class="k">查看评论</span></span></div>
<div class="ob" style="left:1695px;top:933px;width:51px;border-color:#e8a6ae;color:#b8142c"><span class="j" style="width:28.00px"><span class="k">删除</span></span></div>
<div style="position:absolute;left:220px;top:264px;width:1px;height:700px;background:#e8edf3"></div>
<div style="position:absolute;left:1852px;top:264px;width:1px;height:700px;background:#e8edf3"></div>
<script>
(function(){try{var s=document.createElement('span');s.style.cssText='position:absolute;left:-9999px;top:0;visibility:hidden;font-size:100px;font-family:"Liberation Sans",sans-serif;white-space:nowrap';s.textContent='新闻新闻';document.body.appendChild(s);var w=s.getBoundingClientRect().width;s.parentNode.removeChild(s);if(w<340){document.documentElement.className+=' nocjk';}}catch(e){}})();
</script>
</body></html>
